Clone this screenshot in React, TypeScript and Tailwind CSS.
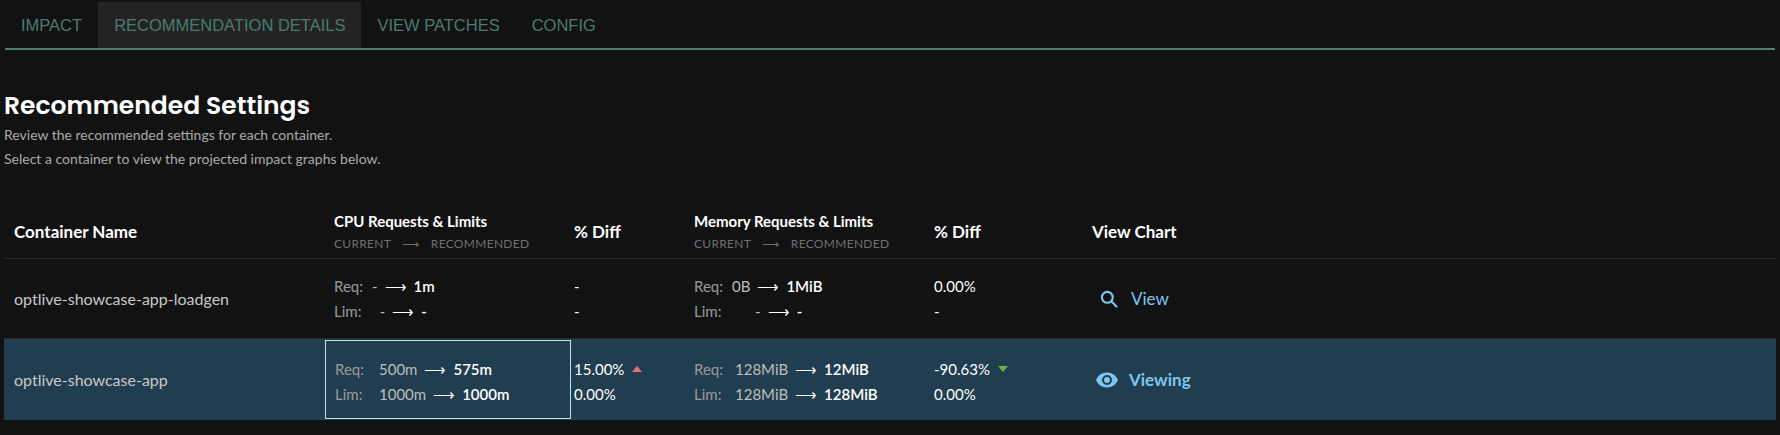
import React from "react";

const Arrow = () => <span className="mx-[7px] text-white">⟶</span>;

function Cell({ l1, l2, lw = 38 }: { l1: [string, string, string]; l2: [string, string, string]; lw?: number }) {
  const line = (lab: string, v: [string, string, string]) => (
    <div className="flex items-center whitespace-pre">
      <span className="text-[#9a9a9a]" style={{ width: lw }}>{lab}</span>
      <span className="text-[#bdbdbd]">{v[0]}</span>
      <Arrow />
      <span className="text-white font-semibold">{v[2]}</span>
    </div>
  );
  return (
    <div className="flex flex-col gap-[3px] text-[15px]">
      {line("Req:", l1)}
      {line("Lim:", l2)}
    </div>
  );
}

const Up = () => <span className="inline-block ml-2 w-0 h-0 border-l-[5px] border-r-[5px] border-b-[6px] border-l-transparent border-r-transparent border-b-[#e57373]" />;
const Down = () => <span className="inline-block ml-2 w-0 h-0 border-l-[5px] border-r-[5px] border-t-[6px] border-l-transparent border-r-transparent border-t-[#6ab04c]" />;

const cols = "grid grid-cols-[320px_240px_120px_240px_158px_1fr]";

export default function App() {
  return (
    <div className="w-[1780px] h-[435px] bg-[#121212] text-white overflow-hidden" style={{ fontFamily: "Lato, sans-serif" }}>
      <div className="mx-[5px] flex border-b-2 border-[#4b7d70] h-[50px] items-stretch pt-[2px]" style={{ fontFamily: "'Liberation Sans', Arial, sans-serif" }}>
        {["IMPACT", "RECOMMENDATION DETAILS", "VIEW PATCHES", "CONFIG"].map((t, i) => (
          <div key={t} className={`px-[16px] flex items-center text-[16.5px] text-[#4a7c70] ${i === 1 ? "bg-[#232323]" : ""}`}>{t}</div>
        ))}
      </div>
      <div className="px-[4px]">
        <h1 className="mt-[41px] text-[25px] font-semibold leading-[30px]" style={{ fontFamily: "Poppins, Inter, sans-serif" }}>Recommended Settings</h1>
        <p className="text-[14px] text-[#aaaaaa] mt-[4px] leading-[20px]">Review the recommended settings for each container.</p>
        <p className="text-[14px] text-[#aaaaaa] mt-[4px] leading-[20px]">Select a container to view the projected impact graphs below.</p>
        <div className="mt-[36px] w-[1772px]">
          <div className={`${cols} h-[54px] items-center border-b border-[#2a2a2a] pl-[10px]`}>
            <div className="text-[17px] font-bold">Container Name</div>
            <div>
              <div className="text-[15px] font-bold">CPU Requests &amp; Limits</div>
              <div className="text-[12px] text-[#6f6f6f] tracking-wide mt-[3px]">CURRENT <span className="mx-[8px]">⟶</span> RECOMMENDED</div>
            </div>
            <div className="text-[17px] font-bold">% Diff</div>
            <div>
              <div className="text-[15px] font-bold">Memory Requests &amp; Limits</div>
              <div className="text-[12px] text-[#6f6f6f] tracking-wide mt-[3px]">CURRENT <span className="mx-[8px]">⟶</span> RECOMMENDED</div>
            </div>
            <div className="text-[17px] font-bold">% Diff</div>
            <div className="text-[17px] font-bold">View Chart</div>
          </div>
          <div className={`${cols} h-[80px] items-center border-b border-[#2a2a2a] pl-[10px]`}>
            <div className="text-[16px] text-[#c8c8c8]">optlive-showcase-app-loadgen</div>
            <Cell l1={["-", "", "1m"]} l2={["  -", "", "-"]} />
            <div className="flex flex-col gap-[3px] text-[15px]"><span>-</span><span>-</span></div>
            <Cell l1={["0B", "", "1MiB"]} l2={["      -", "", "-"]} />
            <div className="flex flex-col gap-[3px] text-[15px]"><span>0.00%</span><span>-</span></div>
            <div className="flex items-center gap-[12px] text-[17px] text-[#7cc5ee] pl-[7px]">
              <svg width="20" height="20" viewBox="0 0 24 24" fill="none" stroke="#7cc5ee" strokeWidth="2.6"><circle cx="10" cy="10" r="6.5" /><path d="M15 15l6 6" strokeLinecap="round" /></svg>
              View
            </div>
          </div>
          <div className={`${cols} h-[81px] items-stretch bg-[#213d50] pl-[10px]`}>
            <div className="text-[16px] text-[#c8c8c8] flex items-center">optlive-showcase-app</div>
            <div className="-ml-[9px] mr-[3px] my-[1px] border border-[#b8e8e2] flex items-center pl-[9px] pt-[4px]">
              <Cell lw={44} l1={["500m", "", "575m"]} l2={["1000m", "", "1000m"]} />
            </div>
            <div className="flex flex-col justify-center gap-[3px] text-[15px] pt-[4px]"><span className="flex items-center">15.00%<Up /></span><span>0.00%</span></div>
            <div className="flex items-center pt-[4px]"><Cell lw={41} l1={["128MiB", "", "12MiB"]} l2={["128MiB", "", "128MiB"]} /></div>
            <div className="flex flex-col justify-center gap-[3px] text-[15px] pt-[4px]"><span className="flex items-center">-90.63%<Down /></span><span>0.00%</span></div>
            <div className="flex items-center gap-[10px] text-[17px] font-bold text-[#7cc5ee] pl-[3px]">
              <svg width="24" height="24" viewBox="0 0 24 24" fill="#7cc5ee"><path d="M12 4.5C7 4.5 2.7 7.6 1 12c1.7 4.4 6 7.5 11 7.5s9.3-3.1 11-7.5c-1.7-4.4-6-7.5-11-7.5zM12 17a5 5 0 110-10 5 5 0 010 10zm0-8a3 3 0 100 6 3 3 0 000-6z" /></svg>
              Viewing
            </div>
          </div>
        </div>
      </div>
    </div>
  );
}
